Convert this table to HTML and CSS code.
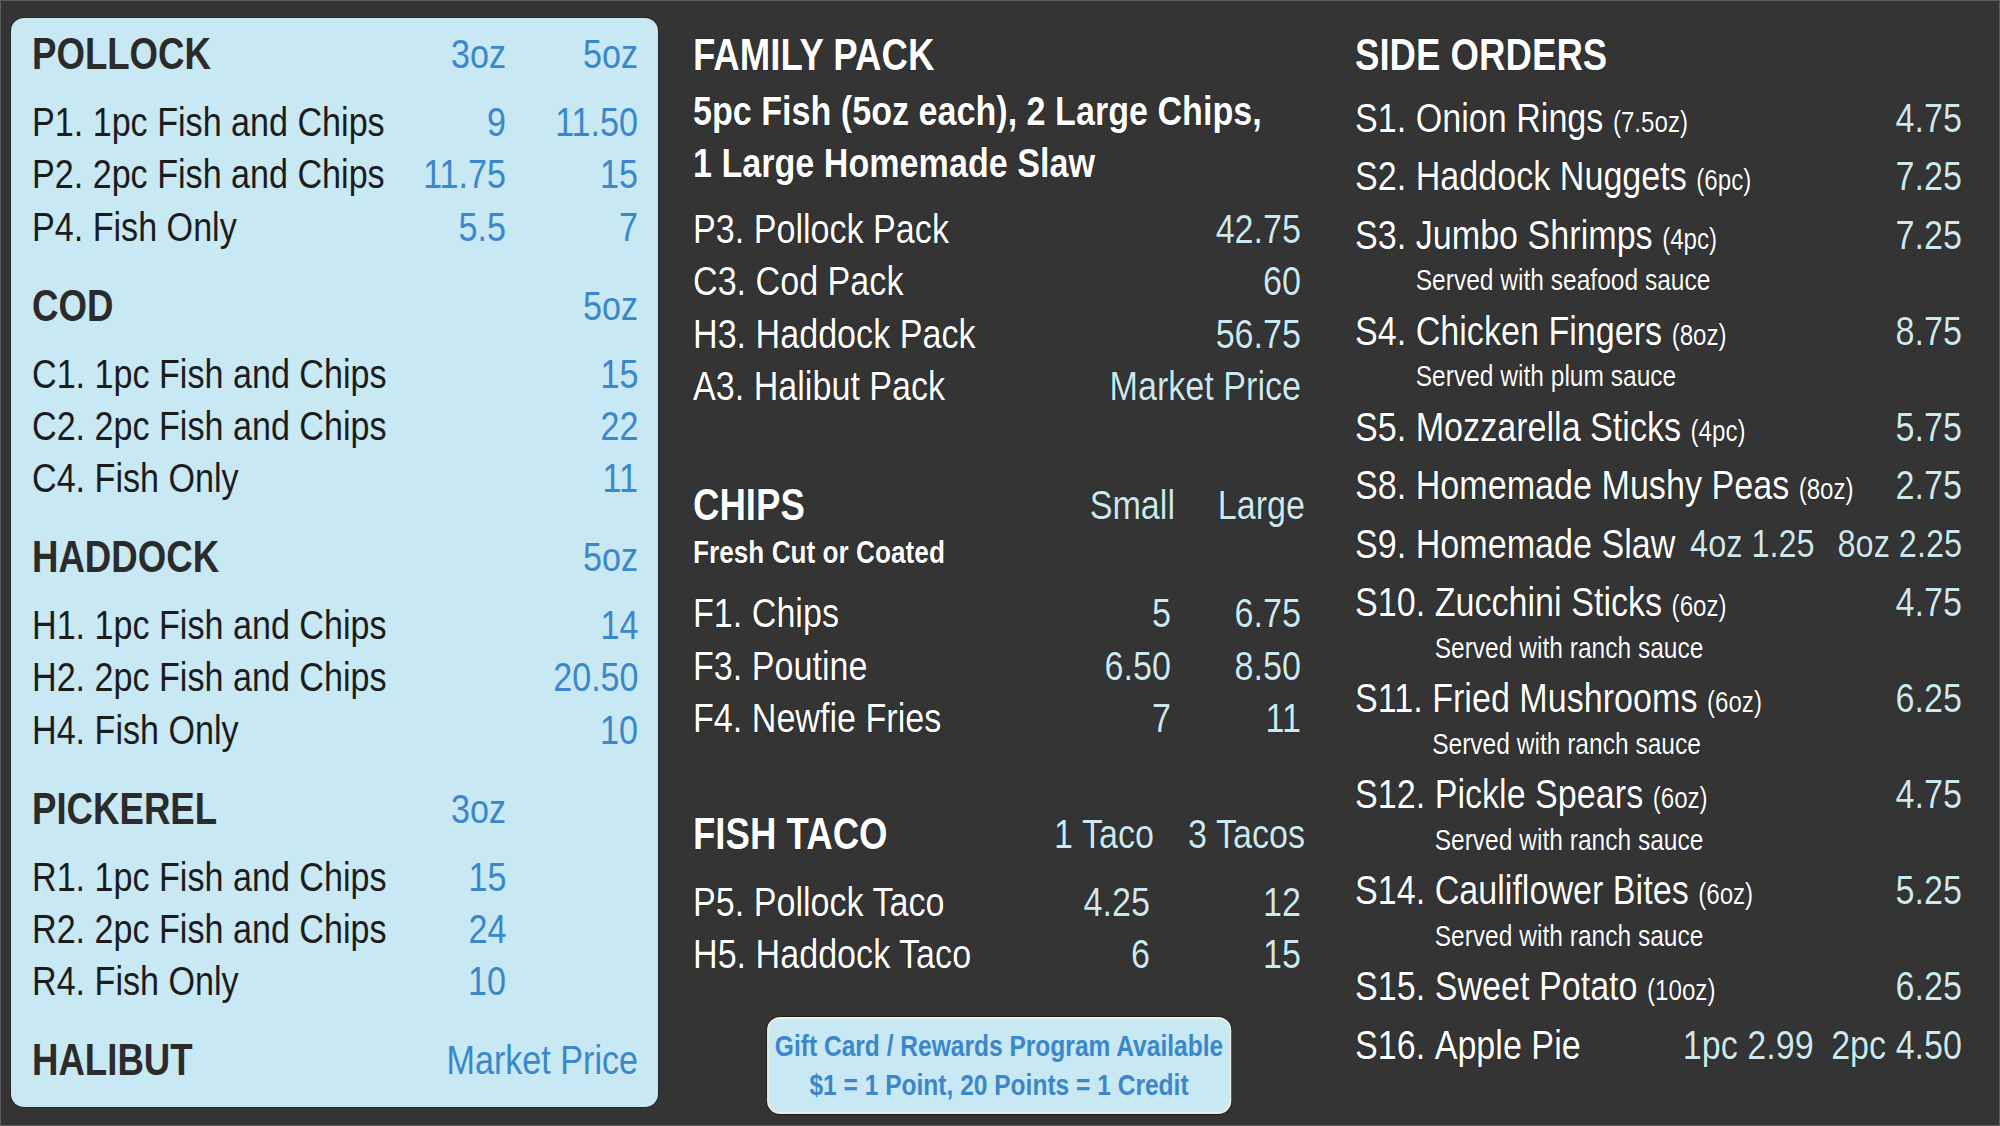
FILE: index.html
```html
<!DOCTYPE html>
<html lang="en">
<head>
<meta charset="utf-8">
<title>Menu Board</title>
<link rel="stylesheet" href="styles.css">
</head>
<body>
<main class="board">
  <section class="panel">
    <div class="sq sq-panel">
      <div class="fish">
        <div class="row head"><span class="title">POLLOCK</span><span class="c1">3oz</span><span class="c2">5oz</span></div>
        <div class="row item"><span class="name">P1. 1pc Fish and Chips</span><span class="c1">9</span><span class="c2">11.50</span></div>
        <div class="row item"><span class="name">P2. 2pc Fish and Chips</span><span class="c1">11.75</span><span class="c2">15</span></div>
        <div class="row item"><span class="name">P4. Fish Only</span><span class="c1">5.5</span><span class="c2">7</span></div>
      </div>
      <div class="fish">
        <div class="row head"><span class="title">COD</span><span class="c1"></span><span class="c2">5oz</span></div>
        <div class="row item"><span class="name">C1. 1pc Fish and Chips</span><span class="c1"></span><span class="c2">15</span></div>
        <div class="row item"><span class="name">C2. 2pc Fish and Chips</span><span class="c1"></span><span class="c2">22</span></div>
        <div class="row item"><span class="name">C4. Fish Only</span><span class="c1"></span><span class="c2">11</span></div>
      </div>
      <div class="fish">
        <div class="row head"><span class="title">HADDOCK</span><span class="c1"></span><span class="c2">5oz</span></div>
        <div class="row item"><span class="name">H1. 1pc Fish and Chips</span><span class="c1"></span><span class="c2">14</span></div>
        <div class="row item"><span class="name">H2. 2pc Fish and Chips</span><span class="c1"></span><span class="c2">20.50</span></div>
        <div class="row item"><span class="name">H4. Fish Only</span><span class="c1"></span><span class="c2">10</span></div>
      </div>
      <div class="fish">
        <div class="row head"><span class="title">PICKEREL</span><span class="c1">3oz</span><span class="c2"></span></div>
        <div class="row item"><span class="name">R1. 1pc Fish and Chips</span><span class="c1">15</span><span class="c2"></span></div>
        <div class="row item"><span class="name">R2. 2pc Fish and Chips</span><span class="c1">24</span><span class="c2"></span></div>
        <div class="row item"><span class="name">R4. Fish Only</span><span class="c1">10</span><span class="c2"></span></div>
      </div>
      <div class="fish last">
        <div class="row head"><span class="title">HALIBUT</span><span class="span2">Market Price</span></div>
      </div>
    </div>
  </section>

  <section class="col middle">
    <div class="sq sq-middle">
      <h2 class="title">FAMILY PACK</h2>
      <p class="sub">5pc Fish (5oz each), 2 Large Chips,<br>1 Large Homemade Slaw</p>
      <div class="list pack">
        <div class="line"><span class="name">P3. Pollock Pack</span><span class="price">42.75</span></div>
        <div class="line"><span class="name">C3. Cod Pack</span><span class="price">60</span></div>
        <div class="line"><span class="name">H3. Haddock Pack</span><span class="price">56.75</span></div>
        <div class="line"><span class="name">A3. Halibut Pack</span><span class="price">Market Price</span></div>
      </div>

      <div class="chips">
        <div class="line head"><span class="title">CHIPS</span><span class="lbl">Small</span><span class="lbl">Large</span></div>
        <p class="note">Fresh Cut or Coated</p>
        <div class="list">
          <div class="line"><span class="name">F1. Chips</span><span class="price">5</span><span class="price">6.75</span></div>
          <div class="line"><span class="name">F3. Poutine</span><span class="price">6.50</span><span class="price">8.50</span></div>
          <div class="line"><span class="name">F4. Newfie Fries</span><span class="price">7</span><span class="price">11</span></div>
        </div>
      </div>

      <div class="taco">
        <div class="line head"><span class="title">FISH TACO</span><span class="lbl">1 Taco</span><span class="lbl">3 Tacos</span></div>
        <div class="list">
          <div class="line"><span class="name">P5. Pollock Taco</span><span class="price">4.25</span><span class="price">12</span></div>
          <div class="line"><span class="name">H5. Haddock Taco</span><span class="price">6</span><span class="price">15</span></div>
        </div>
      </div>

      <div class="gift">
        <p>Gift Card / Rewards Program Available</p>
        <p>$1 = 1 Point, 20 Points = 1 Credit</p>
      </div>
    </div>
  </section>

  <section class="col side">
    <div class="sq sq-side">
      <h2 class="title">SIDE ORDERS</h2>
      <div class="sides">
        <div class="s"><span class="code">S1.&nbsp;</span><span class="nm">Onion Rings <small>(7.5oz)</small></span><span class="price">4.75</span></div>
        <div class="s"><span class="code">S2.&nbsp;</span><span class="nm">Haddock Nuggets <small>(6pc)</small></span><span class="price">7.25</span></div>
        <div class="s"><span class="code">S3.&nbsp;</span><span class="nm">Jumbo Shrimps <small>(4pc)</small></span><span class="price">7.25</span><span class="served">Served with seafood sauce</span></div>
        <div class="s"><span class="code">S4.&nbsp;</span><span class="nm">Chicken Fingers <small>(8oz)</small></span><span class="price">8.75</span><span class="served">Served with plum sauce</span></div>
        <div class="s"><span class="code">S5.&nbsp;</span><span class="nm">Mozzarella Sticks <small>(4pc)</small></span><span class="price">5.75</span></div>
        <div class="s"><span class="code">S8.&nbsp;</span><span class="nm">Homemade Mushy Peas <small>(8oz)</small></span><span class="price">2.75</span></div>
        <div class="s"><span class="code">S9.&nbsp;</span><span class="nm">Homemade Slaw</span><span class="price duo slaw"><span>4oz 1.25</span><span>8oz 2.25</span></span></div>
        <div class="s"><span class="code">S10.&nbsp;</span><span class="nm">Zucchini Sticks <small>(6oz)</small></span><span class="price">4.75</span><span class="served">Served with ranch sauce</span></div>
        <div class="s"><span class="code">S11.&nbsp;</span><span class="nm">Fried Mushrooms <small>(6oz)</small></span><span class="price">6.25</span><span class="served">Served with ranch sauce</span></div>
        <div class="s"><span class="code">S12.&nbsp;</span><span class="nm">Pickle Spears <small>(6oz)</small></span><span class="price">4.75</span><span class="served">Served with ranch sauce</span></div>
        <div class="s"><span class="code">S14.&nbsp;</span><span class="nm">Cauliflower Bites <small>(6oz)</small></span><span class="price">5.25</span><span class="served">Served with ranch sauce</span></div>
        <div class="s"><span class="code">S15.&nbsp;</span><span class="nm">Sweet Potato <small>(10oz)</small></span><span class="price">6.25</span></div>
        <div class="s"><span class="code">S16.&nbsp;</span><span class="nm">Apple Pie</span><span class="price duo pie"><span>1pc 2.99</span><span>2pc 4.50</span></span></div>
      </div>
    </div>
  </section>
</main>
</body>
</html>
```

FILE: styles.css
```css
* { box-sizing: border-box; }

html, body {
  margin: 0;
  padding: 0;
}

body {
  width: 2000px;
  height: 1126px;
  background: #343434;
  font-family: "Liberation Sans", Arial, sans-serif;
  color: #ffffff;
  overflow: hidden;
}

.board {
  width: 2000px;
  height: 1126px;
  border: 1px solid #5c5c5c;
  display: grid;
  grid-template-columns: 647px 647px 657px;
  padding: 17px 0 0 10px;
  align-items: start;
}

/* condensed type: the board uses a narrow face, reproduced by compressing each column horizontally */
.sq {
  transform: scaleX(0.832);
  transform-origin: 0 0;
}

.sq-panel { width: 728.4px; }
.sq-middle { width: 735.6px; }
.sq-side { width: 729.6px; }

/* ---------- left light panel ---------- */
.panel {
  background: #c8e8f4;
  border-radius: 13px;
  box-shadow: 0 0 0 1px #262626;
  height: 1089px;
  padding: 10px 20px 0 21px;
  color: #1c1c1c;
}

.fish { margin-bottom: 26.7px; }
.fish.last { margin-bottom: 0; }

.row {
  display: grid;
  grid-template-columns: 1fr 144.2px 158.7px;
  height: 52.3px;
  line-height: 52.3px;
  white-space: nowrap;
}

.row.head { margin-bottom: 15.7px; }

.title {
  font-weight: 700;
  font-size: 44px;
  color: #2b2b2b;
}

.row .name { font-size: 41px; }

.c1, .c2, .span2 {
  text-align: right;
  color: #3b87c8;
  font-size: 41px;
}

.span2 { grid-column: 2 / 4; }

/* ---------- dark columns ---------- */
.col {
  padding-top: 11px;
  text-shadow: 0 0 1px #000000;
}

.middle { margin-left: 35px; width: 612px; }
.side { margin-left: 50px; width: 607px; }

.col .title {
  color: #ffffff;
  margin: 0;
  line-height: 52px;
  height: 52px;
}

.sub {
  margin: 4px 0 0;
  font-weight: 700;
  font-size: 41px;
  line-height: 52px;
  white-space: nowrap;
}

.middle .line {
  display: grid;
  white-space: nowrap;
  font-size: 41px;
  height: 52.3px;
  line-height: 52.3px;
}

.pack { margin-top: 14px; }
.pack .line { grid-template-columns: 1fr auto; }

.price {
  text-align: right;
  color: #cde8ef;
  font-size: 41px;
}

.middle .price { padding-right: 4.8px; }

.chips { margin-top: 67px; }
.chips .line { grid-template-columns: 1fr 168.3px 156.3px; }
.chips .list { margin-top: 14px; }

.note {
  margin: 0;
  font-weight: 700;
  font-size: 31.5px;
  line-height: 42px;
}

.taco { margin-top: 64px; }
.taco .line { grid-template-columns: 1fr 192.3px 181.5px; }
.taco .list { margin-top: 15px; }

.lbl {
  text-align: right;
  color: #cde8ef;
  font-size: 41px;
}

.gift {
  margin: 36.5px auto 0;
  width: 557.7px;
  height: 97px;
  background: #c8e8f4;
  border-style: solid;
  border-color: #efeee2;
  border-width: 2px 2.4px;
  box-shadow: 0 0 0 1px #1e1e1e;
  border-radius: 15.6px / 13px;
  padding: 7.5px 0;
  text-align: center;
  color: #3b87c8;
  font-weight: 700;
  font-size: 29.5px;
  line-height: 39px;
  white-space: nowrap;
  text-shadow: none;
}

.gift p { margin: 0; }

/* ---------- side orders ---------- */
.sides { margin-top: 7.75px; }

.s {
  display: grid;
  grid-template-columns: auto 1fr auto;
  white-space: nowrap;
  font-size: 41px;
}

.s > .code, .s > .nm, .s > .price {
  line-height: 58.5px;
  height: 58.5px;
}

.s small { font-size: 29px; }

.served {
  grid-column: 2 / 4;
  font-size: 29.5px;
  line-height: 31.5px;
  height: 37.5px;
}

.duo {
  display: flex;
  gap: 27.6px;
}

.duo.slaw { font-size: 39px; }

.duo.pie { gap: 21px; }
```
